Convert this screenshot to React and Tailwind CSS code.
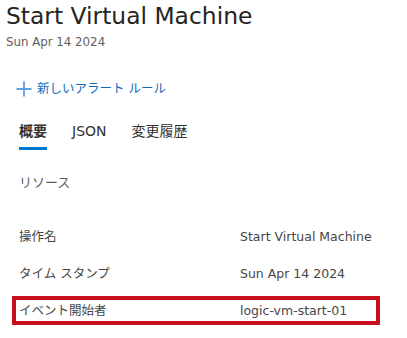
export default function App() {
  const font = { fontFamily: '"DejaVu Sans", "Noto Sans CJK JP", sans-serif' };
  return (
    <div className="w-[407px] h-[338px] bg-white overflow-hidden" style={font}>
      <div className="pl-[6px]">
        <div className="text-[23.4px] leading-[32px] text-[#252423]">Start Virtual Machine</div>
        <div className="text-[11.8px] leading-[16px] text-[#605e5c] mt-[2px]">Sun Apr 14 2024</div>
      </div>
      <div className="flex items-center pl-[16px] mt-[30px] h-[18px] gap-[5px]">
        <svg width="16" height="16" viewBox="0 0 16 16">
          <path d="M8 0.5 V15.5 M0.5 8 H15.5" stroke="#5aa0e0" strokeWidth="1.8" fill="none" />
        </svg>
        <span className="text-[12.5px] text-[#0f6cbd]">新しいアラート ルール</span>
      </div>
      <div className="flex pl-[19px] mt-[23px] gap-[25px] h-[32px]">
        <div className="flex flex-col">
          <span className="text-[14px] leading-[20px] text-[#323130] font-semibold">概要</span>
          <div className="h-[3px] bg-[#0078d4] mt-[6px]" />
        </div>
        <span className="text-[14px] leading-[20px] text-[#323130]">JSON</span>
        <span className="text-[14px] leading-[20px] text-[#323130]">変更履歴</span>
      </div>
      <div className="pl-[19px] mt-[21px] text-[13px] leading-[18px] text-[#605e5c]">リソース</div>
      <div className="mt-[26px] flex flex-col text-[12.5px] leading-[18px] text-[#484644]">
        <div className="flex items-center h-[37px] pl-[19px]">
          <span className="w-[221px]">操作名</span>
          <span>Start Virtual Machine</span>
        </div>
        <div className="flex items-center h-[37px] pl-[19px]">
          <span className="w-[221px]">タイム スタンプ</span>
          <span>Sun Apr 14 2024</span>
        </div>
        <div className="flex items-center mt-[4px] ml-[12px] w-[368px] h-[29px] border-[4px] border-[#c80f1e] pl-[3px]">
          <span className="w-[221px]">イベント開始者</span>
          <span>logic-vm-start-01</span>
        </div>
      </div>
    </div>
  );
}
